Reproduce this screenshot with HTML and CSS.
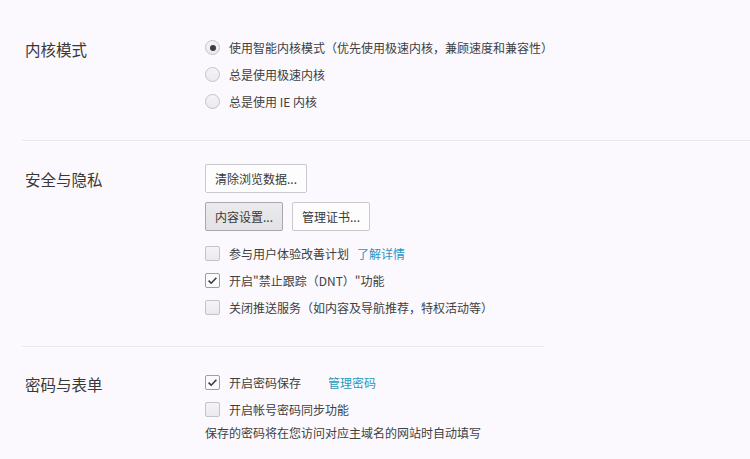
FILE: index.html
```html
<!DOCTYPE html>
<html lang="zh-CN">
<head>
<meta charset="utf-8">
<title>设置</title>
<link rel="stylesheet" href="styles.css">
</head>
<body>
<div class="page">
  <section class="sec sec-kernel">
    <h2 class="title">内核模式</h2>
    <div class="body">
      <div class="row"><span class="radio on"></span><span>使用智能内核模式（优先使用极速内核，兼顾速度和兼容性）</span></div>
      <div class="row"><span class="radio"></span><span>总是使用极速内核</span></div>
      <div class="row"><span class="radio"></span><span>总是使用 IE 内核</span></div>
    </div>
  </section>
  <div class="sep"></div>
  <section class="sec sec-privacy">
    <h2 class="title t-btn">安全与隐私</h2>
    <div class="body">
      <div class="btns"><button class="btn">清除浏览数据...</button></div>
      <div class="btns"><button class="btn pressed">内容设置...</button><button class="btn">管理证书...</button></div>
      <div class="checks">
        <div class="row"><span class="check"></span><span>参与用户体验改善计划</span><a class="link l1">了解详情</a></div>
        <div class="row"><span class="check on"><svg viewBox="0 0 15 15" width="15" height="15"><path d="M3.6 7.6 L6.2 10.2 L11.4 4.8" fill="none" stroke="#3a3a3a" stroke-width="1.6"/></svg></span><span>开启"禁止跟踪（DNT）"功能</span></div>
        <div class="row"><span class="check"></span><span>关闭推送服务（如内容及导航推荐，特权活动等）</span></div>
      </div>
    </div>
  </section>
  <div class="sep short"></div>
  <section class="sec sec-pass">
    <h2 class="title">密码与表单</h2>
    <div class="body">
      <div class="row"><span class="check on"><svg viewBox="0 0 15 15" width="15" height="15"><path d="M3.6 7.6 L6.2 10.2 L11.4 4.8" fill="none" stroke="#3a3a3a" stroke-width="1.6"/></svg></span><span>开启密码保存</span><a class="link l2">管理密码</a></div>
      <div class="row"><span class="check"></span><span>开启帐号密码同步功能</span></div>
      <p class="note">保存的密码将在您访问对应主域名的网站时自动填写</p>
    </div>
  </section>
</div>
</body>
</html>
```

FILE: styles.css
```css
html, body {
  margin: 0;
  padding: 0;
  background: #fbf9fd;
}
body {
  font-family: "Noto Sans CJK SC", "Noto Sans", sans-serif;
  color: #404040;
  font-size: 12px;
  width: 750px;
  height: 459px;
  overflow: hidden;
}
.sec {
  display: grid;
  grid-template-columns: 205px 1fr;
}
.sec-kernel { padding: 34px 0 25px; }
.sec-privacy { padding: 22px 0 25px; }
.sec-pass { padding: 21px 0 0; }
.title {
  margin: 0;
  padding-left: 25px;
  font-size: 15.5px;
  font-weight: normal;
  line-height: 30px;
  color: #383838;
}
.t-btn { line-height: 31px; }
.body {
  display: flex;
  flex-direction: column;
}
.row {
  display: flex;
  align-items: center;
  height: 27px;
  white-space: nowrap;
}
.radio, .check {
  width: 15px;
  height: 15px;
  box-sizing: border-box;
  margin-right: 9px;
  flex: none;
  background: linear-gradient(#f5f3f7, #ebe9ee);
  border: 1px solid #c5c2c9;
  position: relative;
}
.radio { border-radius: 50%; }
.radio.on::after {
  content: "";
  position: absolute;
  left: 3.5px;
  top: 3.5px;
  width: 6px;
  height: 6px;
  border-radius: 50%;
  background: #3e3e3e;
}
.check { border-radius: 2px; }
.check.on { background: #fbfafc; border-color: #9f9da3; }
.check svg { position: absolute; left: -1px; top: -1px; }
.btns {
  display: flex;
  gap: 9px;
  margin-bottom: 9px;
}
.btn {
  font: inherit;
  color: #383838;
  height: 29px;
  padding: 0 9px;
  border: 1px solid #cbc9cd;
  border-radius: 2px;
  background: #fdfdfe;
  cursor: default;
}
.btn.pressed {
  background: linear-gradient(#ebeaec, #e2e1e4);
  border-color: #a9a7ab;
}
.link {
  color: #2a93c4;
  text-decoration: none;
}
.l1 { margin-left: 8px; }
.l2 { margin-left: 27px; color: #2b98ba; }
.sep {
  margin-left: 22px;
  height: 0;
  border-top: 1px solid #ebe8ee;
  border-bottom: 1px solid #fefdfe;
}
.sep.short { width: 522px; }
.note {
  margin: 0;
  line-height: 20px;
}
```
